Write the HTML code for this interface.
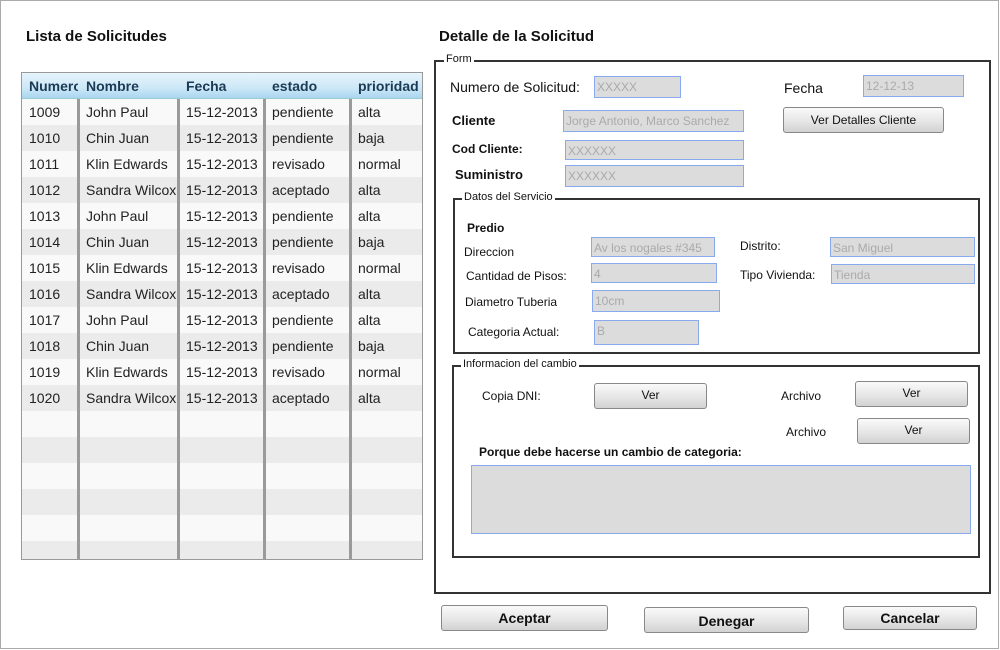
<!DOCTYPE html>
<html><head><meta charset="utf-8"><style>
*{box-sizing:border-box;margin:0;padding:0}
body{width:1000px;height:650px;background:#fff;font-family:"Liberation Sans",Arial,sans-serif;position:relative;overflow:hidden;color:#111}
.a{position:absolute}
.frame{left:0;top:0;width:999px;height:649px;border:1px solid #aaa}
h1{position:absolute;font-size:15px;font-weight:bold;color:#111}
.tbl{left:21px;top:72px;width:402px;height:488px;border:1px solid #999;background:#f0f0f0;overflow:hidden}
.hd{left:0;top:0;width:400px;height:26px;background:linear-gradient(#e6f4fc,#cde8f7 60%,#a9d6f0);border-bottom:1px solid #9cc;overflow:hidden}
.hd span{position:absolute;top:5px;font-size:14px;font-weight:bold;color:#1a3a55;white-space:nowrap}
.row{position:absolute;left:0;width:400px;height:26px}
.row span{position:absolute;top:5px;font-size:14px;color:#222}
.vl{position:absolute;top:0;width:3px;height:488px;background:#9a9a9a}
.fs{border:2px solid #333}
.lg{position:absolute;background:#fff;font-size:11px;padding:0 2px;color:#111}
.in{position:absolute;background:#dcdcdc;border:1px solid #8aaaf0;font-size:12px;color:#aaa;padding:3px 2px;white-space:nowrap;overflow:hidden}
.btn{position:absolute;border:1px solid #888;border-radius:3px;background:linear-gradient(#fafafa,#e6e6e6 55%,#d2d2d2);text-align:center;font-size:12px;color:#111}
.lb{position:absolute;font-size:12px;color:#111;white-space:nowrap}
</style></head><body>
<div class="a frame"></div>
<h1 style="left:26px;top:28px">Lista de Solicitudes</h1>
<h1 style="left:439px;top:28px">Detalle de la Solicitud</h1>

<div class="a tbl">
<div class="a hd"><span style="left:7px;width:49px;overflow:hidden">Numero</span><span style="left:64px">Nombre</span><span style="left:164px">Fecha</span><span style="left:250px">estado</span><span style="left:336px">prioridad</span></div>
<div class="row" style="top:26px;background:#f9f9f9"><span style="left:7px">1009</span><span style="left:64px">John Paul</span><span style="left:164px">15-12-2013</span><span style="left:250px">pendiente</span><span style="left:336px">alta</span></div>
<div class="row" style="top:52px;background:#ebebeb"><span style="left:7px">1010</span><span style="left:64px">Chin Juan</span><span style="left:164px">15-12-2013</span><span style="left:250px">pendiente</span><span style="left:336px">baja</span></div>
<div class="row" style="top:78px;background:#f9f9f9"><span style="left:7px">1011</span><span style="left:64px">Klin Edwards</span><span style="left:164px">15-12-2013</span><span style="left:250px">revisado</span><span style="left:336px">normal</span></div>
<div class="row" style="top:104px;background:#ebebeb"><span style="left:7px">1012</span><span style="left:64px">Sandra Wilcox</span><span style="left:164px">15-12-2013</span><span style="left:250px">aceptado</span><span style="left:336px">alta</span></div>
<div class="row" style="top:130px;background:#f9f9f9"><span style="left:7px">1013</span><span style="left:64px">John Paul</span><span style="left:164px">15-12-2013</span><span style="left:250px">pendiente</span><span style="left:336px">alta</span></div>
<div class="row" style="top:156px;background:#ebebeb"><span style="left:7px">1014</span><span style="left:64px">Chin Juan</span><span style="left:164px">15-12-2013</span><span style="left:250px">pendiente</span><span style="left:336px">baja</span></div>
<div class="row" style="top:182px;background:#f9f9f9"><span style="left:7px">1015</span><span style="left:64px">Klin Edwards</span><span style="left:164px">15-12-2013</span><span style="left:250px">revisado</span><span style="left:336px">normal</span></div>
<div class="row" style="top:208px;background:#ebebeb"><span style="left:7px">1016</span><span style="left:64px">Sandra Wilcox</span><span style="left:164px">15-12-2013</span><span style="left:250px">aceptado</span><span style="left:336px">alta</span></div>
<div class="row" style="top:234px;background:#f9f9f9"><span style="left:7px">1017</span><span style="left:64px">John Paul</span><span style="left:164px">15-12-2013</span><span style="left:250px">pendiente</span><span style="left:336px">alta</span></div>
<div class="row" style="top:260px;background:#ebebeb"><span style="left:7px">1018</span><span style="left:64px">Chin Juan</span><span style="left:164px">15-12-2013</span><span style="left:250px">pendiente</span><span style="left:336px">baja</span></div>
<div class="row" style="top:286px;background:#f9f9f9"><span style="left:7px">1019</span><span style="left:64px">Klin Edwards</span><span style="left:164px">15-12-2013</span><span style="left:250px">revisado</span><span style="left:336px">normal</span></div>
<div class="row" style="top:312px;background:#ebebeb"><span style="left:7px">1020</span><span style="left:64px">Sandra Wilcox</span><span style="left:164px">15-12-2013</span><span style="left:250px">aceptado</span><span style="left:336px">alta</span></div>
<div class="row" style="top:338px;background:#f9f9f9"></div>
<div class="row" style="top:364px;background:#ebebeb"></div>
<div class="row" style="top:390px;background:#f9f9f9"></div>
<div class="row" style="top:416px;background:#ebebeb"></div>
<div class="row" style="top:442px;background:#f9f9f9"></div>
<div class="row" style="top:468px;background:#ebebeb"></div>
<div class="vl" style="left:55px;top:26px"></div><div class="vl" style="left:155px;top:26px"></div><div class="vl" style="left:241px;top:26px"></div><div class="vl" style="left:327px;top:26px"></div>
</div>

<div class="a fs" style="left:434px;top:60px;width:557px;height:534px"></div>
<div class="lg" style="left:444px;top:53px">Form</div>
<div class="lb" style="left:450px;top:79px;font-size:14px">Numero de Solicitud:</div>
<div class="in" style="left:594px;top:76px;width:87px;height:22px">XXXXX</div>
<div class="lb" style="left:784px;top:80px;font-size:14px">Fecha</div>
<div class="in" style="left:863px;top:75px;width:101px;height:22px">12-12-13</div>
<div class="lb" style="left:452px;top:113px;font-size:13px;font-weight:bold">Cliente</div>
<div class="in" style="left:563px;top:110px;width:181px;height:22px">Jorge Antonio, Marco Sanchez</div>
<div class="btn" style="left:783px;top:107px;width:161px;height:26px;padding-top:5px">Ver Detalles Cliente</div>
<div class="lb" style="left:452px;top:142px;font-weight:bold">Cod Cliente:</div>
<div class="in" style="left:565px;top:140px;width:179px;height:20px">XXXXXX</div>
<div class="lb" style="left:455px;top:167px;font-size:13px;font-weight:bold">Suministro</div>
<div class="in" style="left:565px;top:165px;width:179px;height:22px">XXXXXX</div>

<div class="a fs" style="left:453px;top:198px;width:527px;height:156px"></div>
<div class="lg" style="left:462px;top:191px">Datos del Servicio</div>
<div class="lb" style="left:467px;top:221px;font-weight:bold">Predio</div>
<div class="lb" style="left:464px;top:245px">Direccion</div>
<div class="in" style="left:591px;top:237px;width:124px;height:20px">Av  los nogales #345</div>
<div class="lb" style="left:740px;top:239px">Distrito:</div>
<div class="in" style="left:830px;top:237px;width:145px;height:20px">San Miguel</div>
<div class="lb" style="left:466px;top:269px">Cantidad de Pisos:</div>
<div class="in" style="left:591px;top:263px;width:126px;height:20px">4</div>
<div class="lb" style="left:740px;top:268px">Tipo Vivienda:</div>
<div class="in" style="left:831px;top:264px;width:144px;height:20px">Tienda</div>
<div class="lb" style="left:465px;top:295px">Diametro Tuberia</div>
<div class="in" style="left:592px;top:290px;width:128px;height:22px">10cm</div>
<div class="lb" style="left:468px;top:325px">Categoria Actual:</div>
<div class="in" style="left:594px;top:320px;width:105px;height:25px">B</div>

<div class="a fs" style="left:452px;top:365px;width:528px;height:193px"></div>
<div class="lg" style="left:461px;top:358px">Informacion del cambio</div>
<div class="lb" style="left:482px;top:389px">Copia DNI:</div>
<div class="btn" style="left:594px;top:383px;width:113px;height:26px;padding-top:4px">Ver</div>
<div class="lb" style="left:781px;top:389px">Archivo</div>
<div class="btn" style="left:855px;top:381px;width:113px;height:26px;padding-top:4px">Ver</div>
<div class="lb" style="left:786px;top:425px">Archivo</div>
<div class="btn" style="left:857px;top:418px;width:113px;height:26px;padding-top:4px">Ver</div>
<div class="lb" style="left:479px;top:445px;font-weight:bold">Porque debe hacerse un cambio de categoria:</div>
<div class="in" style="left:471px;top:465px;width:500px;height:69px"></div>

<div class="btn" style="left:441px;top:605px;width:167px;height:26px;font-size:14px;font-weight:bold;padding-top:4px">Aceptar</div>
<div class="btn" style="left:644px;top:607px;width:165px;height:26px;font-size:14px;font-weight:bold;padding-top:5px">Denegar</div>
<div class="btn" style="left:843px;top:606px;width:134px;height:24px;font-size:14px;font-weight:bold;padding-top:3px">Cancelar</div>
</body></html>
